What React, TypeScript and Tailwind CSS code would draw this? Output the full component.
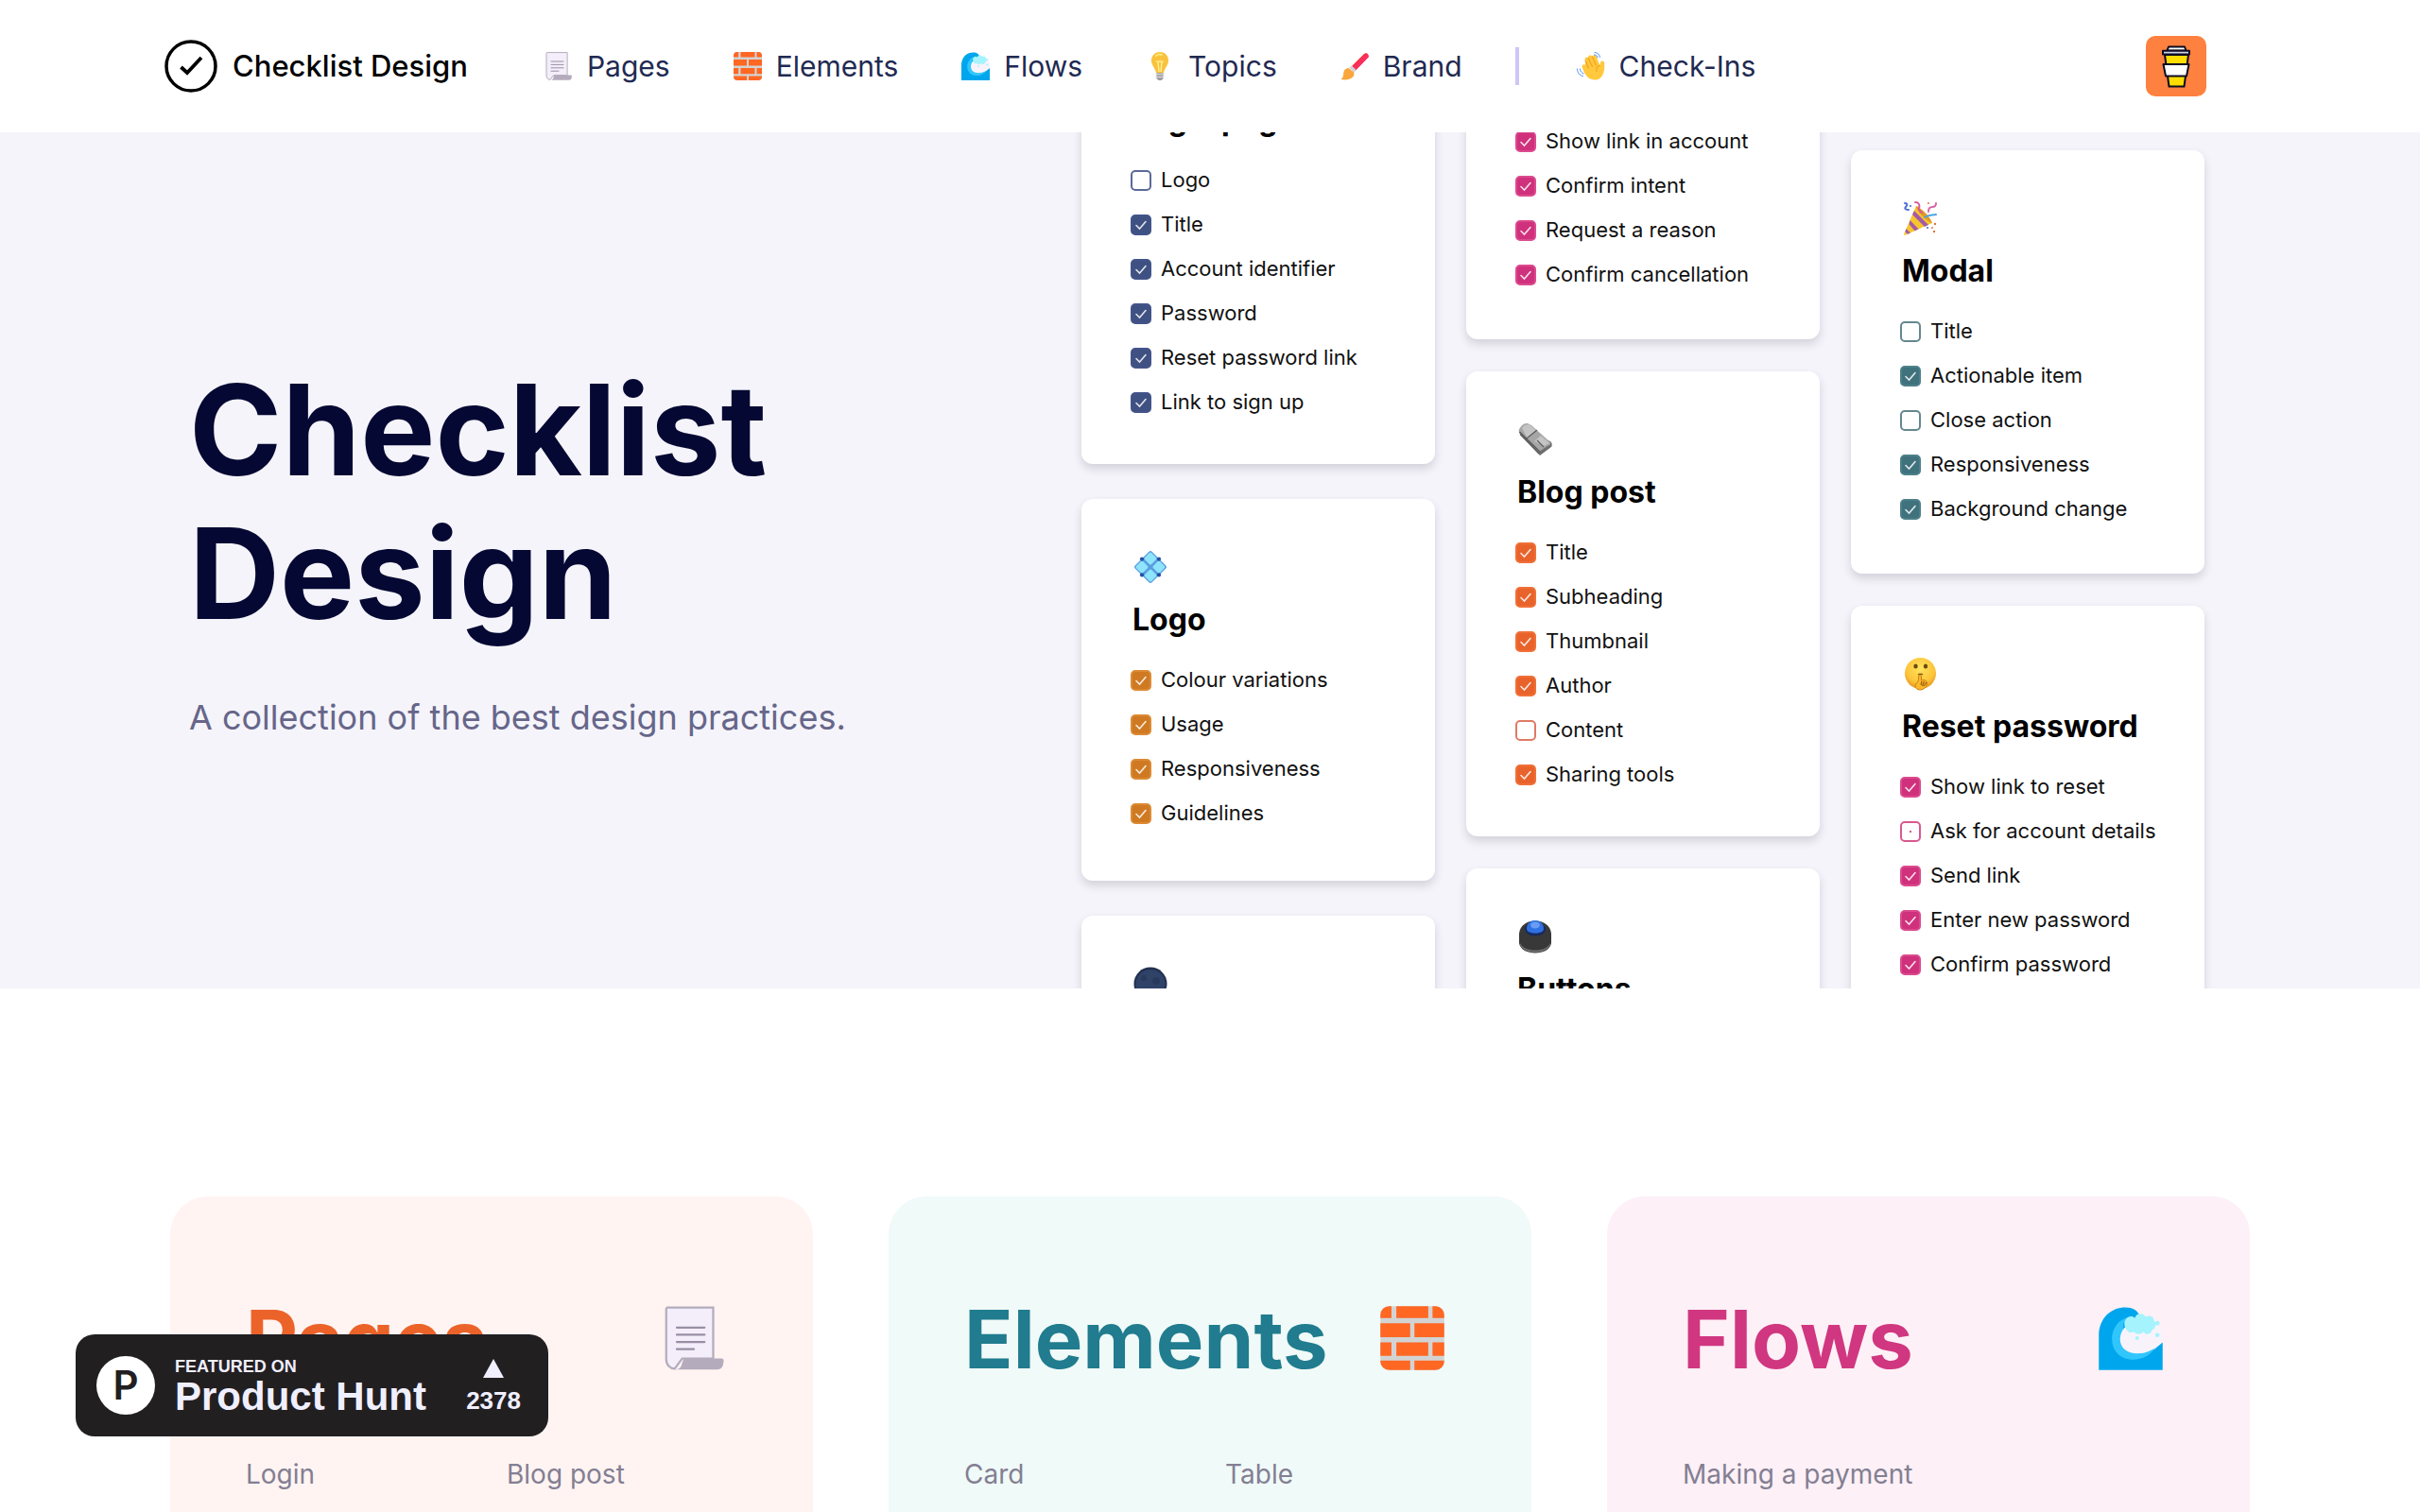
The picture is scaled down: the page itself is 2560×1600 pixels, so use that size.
import type { ReactNode } from "react";

/* ---------- Emoji-style drawings ---------- */

type IconProps = { className?: string };

function PageIcon({ className }: IconProps) {
  return (
    <svg viewBox="0 0 32 32" className={className} aria-hidden="true">
      <path d="M3.500 1.600h21.600v24H10.500L7 30.400c-2 0-4-1.600-4-4.500V2.200z" fill="#f3eefa" stroke="#b4acbc" strokeWidth="1" />
      <path d="M12.500 25.500H29c1.100 0 1.100 1 .9 2-.3 2-1 3.300-3 3.300H7c3 0 3.200-2 3.700-3.800.3-1 .8-1.500 1.800-1.500z" fill="#b4acbc" />
      <path d="M8 11h13M8 14.400h13M8 17.800h13M8 21.200h8" stroke="#998ea4" strokeWidth="1" strokeLinecap="round" />
    </svg>
  );
}

function BrickIcon({ className }: IconProps) {
  return (
    <svg viewBox="0 0 32 32" className={className} aria-hidden="true">
      <rect x="1" y="1" width="30" height="30" rx="4" fill="#d3d3d3" />
      <g fill="#ff6723">
        <path d="M1 6.500V5a4 4 0 0 1 4-4h1.200v5.500zM8.500 1h15v5.500h-15zM25.500 1H27a4 4 0 0 1 4 4v1.500h-5.500z" />
        <path d="M1 9h14v6.500H1zM17 9h14v6.500H17z" />
        <path d="M1 18h5.200v6.300H1zM8.500 18h15v6.300h-15zM25.500 18H31v6.300h-5.500z" />
        <path d="M1 26.500h14V31H5a4 4 0 0 1-4-4zM17 26.500h14v.5a4 4 0 0 1-4 4H17z" />
      </g>
    </svg>
  );
}

function WaveIcon({ className }: IconProps) {
  return (
    <svg viewBox="0 0 32 32" className={className} aria-hidden="true">
      <path d="M1 31V14C1.500 6 7 1.500 13.500 1.500c4 0 6.500 2 7 5l-5 4-5 10 8 4 7-2 5.500-4.500V31z" fill="#00a6ed" />
      <path d="M17 6c-6 0-9.800 5-9.800 10.500 0 5 3.300 8.800 8.300 9.500 5 .6 10-1.500 12-6l-6 3-9-4V9z" fill="#30c6fc" />
      <path d="M19 8.500c-5 0-8 3.800-8 8s3.500 6.700 8 6.700c5 0 8.500-2.200 12-5.700v-5c-2-4-7-4-12-4z" fill="#f8f3fb" />
      <path d="M13 9.500c0-3 3-4.800 5-3 .5-2.500 4-2.500 5-.5 2-1 4 0 4 2 1.500 1 .5 4-1 4 0 2-3 3-4 1-1 1.500-3.500 1.500-4.500 0-1.500 1-4 0-4.500-3.500z" fill="#a5f3fc" />
      <g fill="#a5f3fc">
        <circle cx="19" cy="16" r=".9" />
        <circle cx="28.500" cy="9" r="1.100" />
        <circle cx="28.500" cy="14.500" r="1" />
      </g>
    </svg>
  );
}

function BulbIcon({ className }: IconProps) {
  return (
    <svg viewBox="0 0 32 32" className={className} aria-hidden="true">
      <path d="M12.500 22h7v7.200l-2 1.800h-3l-2-1.800z" fill="#9b9b9b" />
      <path d="M11.500 24.500h9M11.500 27.500h8.500" stroke="#d3d3d3" strokeWidth="1.600" />
      <path d="M16 1C10.500 1 7 5 7 10c0 5.500 4 7.500 5 13h8c1-5.500 5-7.500 5-13 0-5-3.500-9-9-9z" fill="#f9c23c" />
      <path d="M12.500 10.500c1 2 2 1 3.500 0 1.500 1 2.500 2 3.500 0M14 11l1 11M18 11l-1 11" fill="none" stroke="#fff2a0" strokeWidth="1.300" />
      <path d="M12 5c2-1.800 4-1.800 6-1" fill="none" stroke="#ffe879" strokeWidth="2" strokeLinecap="round" />
    </svg>
  );
}

function BrushIcon({ className }: IconProps) {
  return (
    <svg viewBox="0 0 32 32" className={className} aria-hidden="true">
      <path d="M12 17 26 3c2-2 5.500 0 4.500 3.500L16.500 21z" fill="#f8312f" />
      <path d="M13 18 27 3.500c1.600-1.200 4 .5 3.500 3L16.500 21z" fill="#f92f60" />
      <path d="m10 17.500 3-2 4.500 4.500-2 3.200z" fill="#d3d3d3" />
      <path d="M9.500 18c-4 .5-5 3-5.300 6C4 27 3.500 28.500 1.500 30c5 1 10.500.3 13-3 1-1.500 1.200-3 .5-4.500z" fill="#f9a63c" />
    </svg>
  );
}

function HandIcon({ className }: IconProps) {
  return (
    <svg viewBox="0 0 32 32" className={className} aria-hidden="true">
      <path d="M10 10c-1-3 1.500-4.500 3-2.500-.5-3 3-4 4.300-1.500.5-2.500 4-2.500 4.700.5l3.500 9c.3-2.500.5-5 2.500-5 2.500 0 2.500 3 2.300 6.500-.2 7-3.300 13.500-10 13.500-5 0-9-3-11.500-8l-2-5c-1-3 2-4 3-2.500z" fill="#ffc83d" />
      <path d="m10 10 3.500 8M13 7.500l4.500 9M17.300 6l4.200 9M25.500 15.500c-3 0-4 3-3.500 6" fill="none" stroke="#f59f1f" strokeWidth="1.100" strokeLinecap="round" />
      <path d="M20 1.500c3 0 5 2.200 5.500 5M19.500 4c2 0 3.200 1.200 3.600 3M1.500 19c0 4 2.500 6.800 6 7.500M4.500 19c0 2.500 1.500 4 3.500 4.800" fill="none" stroke="#5092ff" strokeWidth="1" strokeLinecap="round" />
    </svg>
  );
}

function CoffeeIcon({ className }: IconProps) {
  return (
    <svg viewBox="0 0 64 64" className={className} aria-hidden="true">
      <g stroke="#0d0c22" strokeWidth="2" strokeLinejoin="round">
        <path d="M20 20h25l-4.500 33.500h-16z" fill="#ffdd00" />
        <path d="M22.500 15.500 24 11.500h17l1.500 4z" fill="#fff" />
        <path d="M18 15.800h28v3.700H18z" fill="#cfcfe6" />
        <path d="M18.500 30h27l-2.500 12.500H21z" fill="#fff" />
      </g>
    </svg>
  );
}

function LogoMark({ className }: IconProps) {
  return (
    <svg viewBox="0 0 56 56" className={className} aria-hidden="true">
      <circle cx="28" cy="28" r="26" fill="none" stroke="#000" strokeWidth="3.500" />
      <path d="m17.500 29 6.500 6 15-16" fill="none" stroke="#000" strokeWidth="3.800" />
    </svg>
  );
}

function DiamondIcon({ className }: IconProps) {
  return (
    <svg viewBox="1 1 34 34" className={className} aria-hidden="true">
      <rect x="6" y="6" width="24" height="24" rx="2.500" transform="rotate(45 18 18)" fill="#5a9ee0" />
      <g fill="#8de4fb">
        <rect x="13.300" y="4.800" width="9.500" height="9.500" rx="1.500" transform="rotate(45 18 9.500)" />
        <rect x="4.800" y="13.300" width="9.500" height="9.500" rx="1.500" transform="rotate(45 9.500 18)" />
        <rect x="21.700" y="13.300" width="9.500" height="9.500" rx="1.500" transform="rotate(45 26.500 18)" />
        <rect x="13.300" y="21.700" width="9.500" height="9.500" rx="1.500" transform="rotate(45 18 26.500)" />
      </g>
      <g fill="#2450a8">
        <circle cx="9.500" cy="10" r="2" />
        <circle cx="26.500" cy="10" r="2" />
        <circle cx="9.500" cy="26" r="2" />
        <circle cx="26.500" cy="26" r="2" />
      </g>
    </svg>
  );
}

function MoonIcon({ className }: IconProps) {
  return (
    <svg viewBox="0 0 36 36" className={className} aria-hidden="true">
      <circle cx="18" cy="18" r="17.500" fill="#22304f" />
      <circle cx="18" cy="18.500" r="15.500" fill="#2f4268" />
      <circle cx="11" cy="12" r="3" fill="#283a5c" />
      <circle cx="24" cy="15" r="4" fill="#283a5c" />
    </svg>
  );
}

function NewspaperIcon({ className }: IconProps) {
  return (
    <svg viewBox="0 0 36 36" className={className} aria-hidden="true">
      <path d="M1 11 23 35l12-9c1.500-2 .5-5-1-6L1.500 7z" fill="#6f6f6f" />
      <path d="M.5 9C2 4 6 .5 10 1l4 2 20 18c1 2-1 3.500-3 4l-9 6z" fill="#a6a6a6" />
      <path d="M4 6c2-3 5-4.500 8-3.500l7 6-9 9zM17 20l7-6 9 8-6 3z" fill="#c4c4c4" />
      <path d="M2 12.500 22 33M1.500 10 23 31M9 17l11-9M20 19l7 7" stroke="#5c5c5c" strokeWidth="1.200" fill="none" />
    </svg>
  );
}

function TrackballIcon({ className }: IconProps) {
  return (
    <svg viewBox="0 0 36 36" className={className} aria-hidden="true">
      <path d="M1 15C2 6 9 1.500 18 1.500S34 6 35 15v10c-1 7-9 10.500-17 10.500S2 32 1 25z" fill="#383838" />
      <path d="M2 25c2 5 9 7.500 16 7.500S32 30 34 25v2c-2 5-9 7.800-16 7.800S4 32 2 27z" fill="#6e6e6e" />
      <ellipse cx="18" cy="10.500" rx="11" ry="7" fill="#182a5c" />
      <path d="M9 10C9 4 13 1 18 1s9 3 9 9-18 6-18 0z" fill="#2f70e2" />
      <ellipse cx="18" cy="6" rx="5" ry="3.500" fill="#6a9df2" />
    </svg>
  );
}

function PartyIcon({ className }: IconProps) {
  return (
    <svg viewBox="0 0 36 36" className={className} aria-hidden="true">
      <path d="M1 35 14 5c6 4 12 12 17 18L3 35.500c-1.500.5-2.500.3-2-.5z" fill="#f7c52d" />
      <path d="m12 10 15 15-4 2-13-13zM7.500 20l9 9.500-4 1.800-6-7zM3.500 29l4.500 4.500-3 1.300-2.700-2.600z" fill="#a55aa6" />
      <path d="M14 5c4 1 15 11 17 18-4 0-17-12-17-18z" fill="#e29b25" />
      <g fill="none" strokeWidth="2" strokeLinecap="round">
        <path d="M2 2c3 0 3 2 1 4s1 3 3 3" stroke="#4b6fd6" />
        <path d="M13 1c4 0 5 3 4 6s2 4 3 5" stroke="#d65aa0" />
        <path d="M35 2c0 3-1 4-4 4s-4 2-4 5" stroke="#d667a4" />
        <path d="M23 17c4-3 8-2 12-3" stroke="#4ea4e0" />
      </g>
      <g fill="#e0743c">
        <circle cx="34" cy="24" r="1.200" />
        <circle cx="31" cy="28" r="1" />
        <circle cx="33" cy="32" r="1.200" />
        <circle cx="27" cy="2" r="1" />
      </g>
      <circle cx="8" cy="5" r="1.100" fill="#4b6fd6" />
      <circle cx="26" cy="28" r="1.100" fill="#4b6fd6" />
    </svg>
  );
}

function ShushIcon({ className }: IconProps) {
  return (
    <svg viewBox="0 0 36 36" className={className} aria-hidden="true">
      <defs>
        <radialGradient id="shush-face" cx="50%" cy="35%" r="65%">
          <stop offset="0" stopColor="#ffe45c" />
          <stop offset=".7" stopColor="#fdc43a" />
          <stop offset="1" stopColor="#e8961f" />
        </radialGradient>
      </defs>
      <circle cx="18.500" cy="17.500" r="16.500" fill="url(#shush-face)" />
      <ellipse cx="13.500" cy="10" rx="2.200" ry="2.500" fill="#6b4a14" />
      <ellipse cx="24" cy="10" rx="2.200" ry="2.500" fill="#6b4a14" />
      <path d="M16 19c1-1 4-1 5 0" stroke="#8a5c12" strokeWidth="1.500" fill="none" />
      <path d="M16.500 21c0-2 3-2 3 0v4c3-1 6 0 6 2.500 0 4-3 7.500-7.500 7.500-3 0-5-2-5-4.500 0-2 3-3.500 3.500-6z" fill="#fbb829" stroke="#c87e16" strokeWidth="1" />
      <path d="m20 26-1 4M22.500 26l-2 5M25 27l-3 4" stroke="#9a6010" strokeWidth="1.200" />
    </svg>
  );
}

/* ---------- Navigation ---------- */

const navItems: { label: string; icon: ReactNode }[] = [
  { label: "Pages", icon: <PageIcon className="size-8" /> },
  { label: "Elements", icon: <BrickIcon className="size-8" /> },
  { label: "Flows", icon: <WaveIcon className="size-8" /> },
  { label: "Topics", icon: <BulbIcon className="size-8" /> },
  { label: "Brand", icon: <BrushIcon className="size-8" /> },
];

function NavLink({ label, icon }: { label: string; icon: ReactNode }) {
  return (
    <a href="#" className="flex items-center gap-[14px] text-[30px] leading-10 text-[#1f2a52]">
      {icon}
      {label}
    </a>
  );
}

function Header() {
  return (
    <header className="flex h-35 shrink-0 items-center justify-between bg-white pr-[226px] pl-[174px]">
      <div className="flex items-center">
        <a href="#" className="mr-20 flex items-center gap-4 text-[31px] font-medium text-black">
          <LogoMark className="size-14" />
          Checklist Design
        </a>
        <nav className="flex items-center gap-[66px]">
          {navItems.map((item) => (
            <NavLink key={item.label} {...item} />
          ))}
        </nav>
        <div className="mr-15 ml-14 h-10 w-1 bg-[#cdc6f7]" />
        <NavLink label="Check-Ins" icon={<HandIcon className="size-8" />} />
      </div>
      <a href="#" aria-label="Buy me a coffee" className="rounded-[10px] bg-[#ff813f]">
        <CoffeeIcon className="size-16" />
      </a>
    </header>
  );
}

/* ---------- Hero checklists ---------- */

type Item = [label: string, checked: boolean];
type Checklist = { title: string; icon: ReactNode; tone: string; items: Item[]; space: string };

const blue = "border-[#5a6a98] checked:border-[#43548a] checked:bg-[#3f5182]";
const amber = "border-[#d07a22] checked:border-[#dc8a34] checked:bg-[#cf7a23]";
const pink =
  "border-[#d9588f] bg-[radial-gradient(circle,#d9588f_1px,transparent_1px)] checked:border-[#dc4a8e] checked:bg-[#cf317c] checked:bg-none";
const orange = "border-[#e07a64] checked:border-[#f07038] checked:bg-[#e8632b]";
const teal = "border-[#63888f] checked:border-[#4d8089] checked:bg-[#40727d]";

const columns: { offset: string; lists: Checklist[] }[] = [
  {
    offset: "-mt-[141px] gap-[37px]",
    lists: [
      {
        title: "Login page",
        icon: <MoonIcon className="size-9" />,
        tone: blue,
        space: "pb-[42px]",
        items: [
          ["Logo", false],
          ["Title", true],
          ["Account identifier", true],
          ["Password", true],
          ["Reset password link", true],
          ["Link to sign up", true],
        ],
      },
      {
        title: "Logo",
        icon: <DiamondIcon className="size-9" />,
        tone: amber,
        space: "pb-12",
        items: [
          ["Colour variations", true],
          ["Usage", true],
          ["Responsiveness", true],
          ["Guidelines", true],
        ],
      },
      { title: "Dark mode", icon: <MoonIcon className="size-9" />, tone: blue, space: "pb-[42px]", items: [["Contrast", true]] },
    ],
  },
  {
    offset: "-mt-[182px] gap-[34px]",
    lists: [
      {
        title: "Cancelling",
        icon: <TrackballIcon className="size-9" />,
        tone: pink,
        space: "pb-[45px]",
        items: [
          ["Show link in account", true],
          ["Confirm intent", true],
          ["Request a reason", true],
          ["Confirm cancellation", true],
        ],
      },
      {
        title: "Blog post",
        icon: <NewspaperIcon className="size-9" />,
        tone: orange,
        space: "pb-[42px]",
        items: [
          ["Title", true],
          ["Subheading", true],
          ["Thumbnail", true],
          ["Author", true],
          ["Content", false],
          ["Sharing tools", true],
        ],
      },
      { title: "Buttons", icon: <TrackballIcon className="size-9" />, tone: teal, space: "pb-[42px]", items: [["Label", true]] },
    ],
  },
  {
    offset: "mt-[19px] gap-[34px]",
    lists: [
      {
        title: "Modal",
        icon: <PartyIcon className="size-9" />,
        tone: teal,
        space: "pb-[45px]",
        items: [
          ["Title", false],
          ["Actionable item", true],
          ["Close action", false],
          ["Responsiveness", true],
          ["Background change", true],
        ],
      },
      {
        title: "Reset password",
        icon: <ShushIcon className="size-9" />,
        tone: pink,
        space: "pb-[42px]",
        items: [
          ["Show link to reset", true],
          ["Ask for account details", false],
          ["Send link", true],
          ["Enter new password", true],
          ["Confirm password", true],
        ],
      },
    ],
  },
];

function ChecklistCard({ title, icon, tone, items, space }: Checklist) {
  return (
    <article className={`rounded-xl bg-white px-[52px] pt-[54px] shadow-[0_5px_10px_rgba(40,35,60,0.17)] ${space}`}>
      <div className="ml-[3px]">{icon}</div>
      <h2 className="mt-4 ml-[2px] text-[32px] leading-11 font-bold whitespace-nowrap text-black">{title}</h2>
      <ul className="mt-[18px]">
        {items.map(([label, checked]) => (
          <li key={label}>
            <label className="flex h-[47px] items-center gap-[10px] text-[22px] whitespace-nowrap text-[#111]">
              <span className="grid size-[22px] shrink-0">
                <input
                  type="checkbox"
                  defaultChecked={checked}
                  className={`peer col-start-1 row-start-1 size-[22px] appearance-none rounded-[5px] border-2 ${tone}`}
                />
                <svg viewBox="0 0 22 22" className="pointer-events-none invisible z-10 col-start-1 row-start-1 size-[22px] peer-checked:visible" aria-hidden="true">
                  <path d="m6 11.500 3.500 3.500 6.500-7.500" fill="none" stroke="#fff" strokeOpacity=".85" strokeWidth="1.600" strokeLinecap="round" />
                </svg>
              </span>
              {label}
            </label>
          </li>
        ))}
      </ul>
    </article>
  );
}

function Hero() {
  return (
    <section className="flex h-[906px] shrink-0 items-start justify-between overflow-hidden bg-[#f5f4fa] pr-[228px] pl-[200px]">
      <div className="self-center pb-[22px]">
        <h1 className="text-[133px] leading-[152px] font-bold text-[#050833]">
          Checklist
          <br />
          Design
        </h1>
        <p className="mt-[50px] text-[36px] leading-13 text-[#66668a]">A collection of the best design practices.</p>
      </div>
      <div className="grid grid-cols-[374px_374px_374px] items-start gap-x-[33px]">
        {columns.map(({ offset, lists }) => (
          <div key={offset} className={`flex flex-col ${offset}`}>
            {lists.map((list) => (
              <ChecklistCard key={list.title} {...list} />
            ))}
          </div>
        ))}
      </div>
    </section>
  );
}

/* ---------- Categories ---------- */

const categories = [
  { title: "Pages", icon: <PageIcon className="size-[72px]" />, links: ["Login", "Blog post"], card: "bg-[#fff4f2]", text: "text-[#ec632a]", cols: "grid-cols-2" },
  { title: "Elements", icon: <BrickIcon className="size-[72px]" />, links: ["Card", "Table"], card: "bg-[#f0faf8]", text: "text-[#207c8e]", cols: "grid-cols-2" },
  { title: "Flows", icon: <WaveIcon className="size-[72px]" />, links: ["Making a payment"], card: "bg-[#fdf0f6]", text: "text-[#d03780]", cols: "grid-cols-1" },
];

function Categories() {
  return (
    <main className="mx-auto mt-55 grid w-full max-w-[2200px] grid-cols-3 gap-20">
      {categories.map(({ title, icon, links, card, text, cols }) => (
        <section key={title} className={`rounded-t-[40px] px-20 pt-[98px] pb-20 ${card}`}>
          <div className="flex items-start justify-between pr-[10px]">
            <h2 className={`text-[85px] leading-[108px] font-bold ${text}`}>{title}</h2>
            <div className="pt-4">{icon}</div>
          </div>
          <ul className={`mt-[68px] grid gap-x-8 text-[28px] leading-10 text-[#837f93] ${cols}`}>
            {links.map((link) => (
              <li key={link}>
                <a href="#">{link}</a>
              </li>
            ))}
          </ul>
        </section>
      ))}
    </main>
  );
}

function ProductHuntBadge() {
  return (
    <a
      href="#"
      className="fixed bottom-20 left-20 flex h-27 w-125 items-center rounded-[20px] bg-[#221f21] pr-[29px] pl-[22px] font-['Liberation_Sans',sans-serif] font-bold text-[#f0efff]"
    >
      <span className="grid size-[62px] place-items-center rounded-full bg-white font-['Inter',sans-serif] text-[42px] leading-none font-semibold text-[#221f21]">P</span>
      <span className="ml-[21px] flex flex-col pt-1">
        <span className="text-[18px] leading-5">FEATURED ON</span>
        <span className="text-[42px] leading-11">Product Hunt</span>
      </span>
      <span className="ml-auto flex flex-col items-center gap-2 pt-1">
        <svg viewBox="0 0 22 20" className="h-5 w-[22px]" aria-hidden="true">
          <path d="M11 0 22 20H0z" fill="#f0efff" />
        </svg>
        <span className="text-[26px] leading-8">2378</span>
      </span>
    </a>
  );
}

export default function App() {
  return (
    <div className="flex h-screen flex-col overflow-hidden bg-white font-['Inter',sans-serif]">
      <Header />
      <Hero />
      <Categories />
      <ProductHuntBadge />
    </div>
  );
}
